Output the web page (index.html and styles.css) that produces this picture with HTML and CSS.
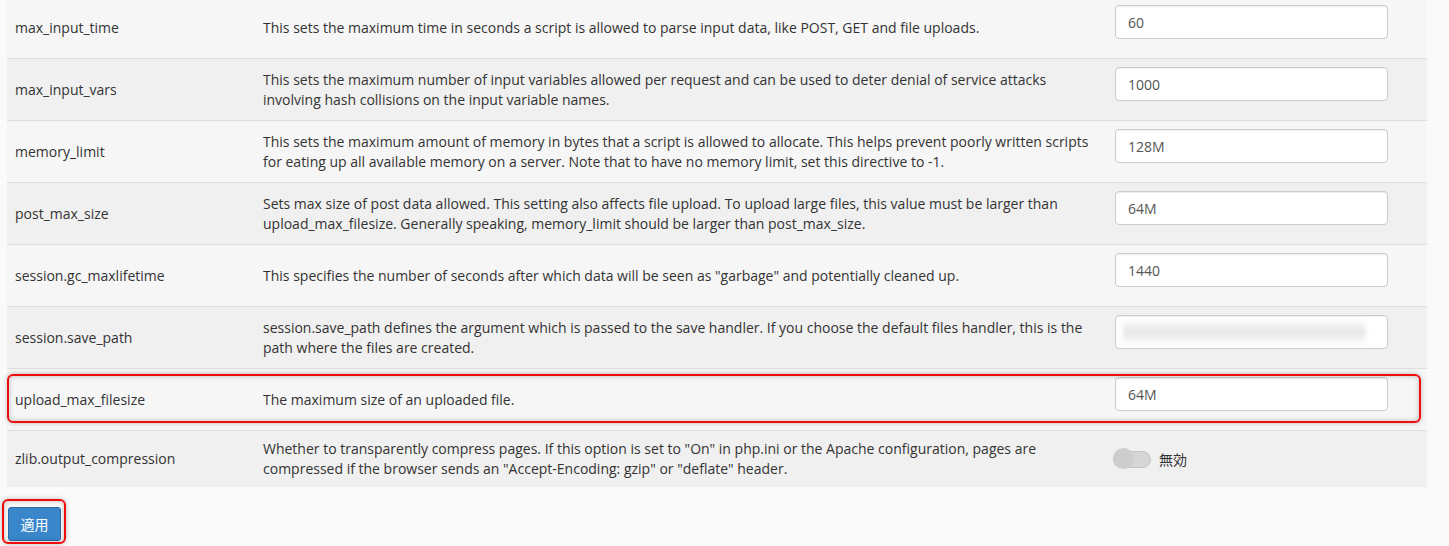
FILE: index.html
```html
<!doctype html>
<html>
<head>
    <meta charset="UTF-8">
    <title>PHP INI エディター</title>
    <link rel="stylesheet" href="styles.css">
</head>
<body>
<div class="page">
    <div class="table-wrap">
        <table class="ini-table">
            <colgroup>
                <col class="col-name">
                <col class="col-desc">
                <col class="col-value">
            </colgroup>
            <tbody>
                <tr>
                    <td>max_input_time</td>
                    <td>This sets the maximum time in seconds a script is allowed to parse input data, like POST, GET and file uploads.</td>
                    <td><input class="field" type="text" value="60"></td>
                </tr>
                <tr>
                    <td>max_input_vars</td>
                    <td>This sets the maximum number of input variables allowed per request and can be used to deter denial of service attacks involving hash collisions on the input variable names.</td>
                    <td><input class="field" type="text" value="1000"></td>
                </tr>
                <tr>
                    <td>memory_limit</td>
                    <td>This sets the maximum amount of memory in bytes that a script is allowed to allocate. This helps prevent poorly written scripts for eating up all available memory on a server. Note that to have no memory limit, set this directive to -1.</td>
                    <td><input class="field" type="text" value="128M"></td>
                </tr>
                <tr>
                    <td>post_max_size</td>
                    <td>Sets max size of post data allowed. This setting also affects file upload. To upload large files, this value must be larger than upload_max_filesize. Generally speaking, memory_limit should be larger than post_max_size.</td>
                    <td><input class="field" type="text" value="64M"></td>
                </tr>
                <tr>
                    <td>session.gc_maxlifetime</td>
                    <td>This specifies the number of seconds after which data will be seen as "garbage" and potentially cleaned up.</td>
                    <td><input class="field" type="text" value="1440"></td>
                </tr>
                <tr>
                    <td>session.save_path</td>
                    <td>session.save_path defines the argument which is passed to the save handler. If you choose the default files handler, this is the path where the files are created.</td>
                    <td>
                        <div class="field-wrap">
                            <input class="field" type="text" value="">
                            <span class="masked"></span>
                        </div>
                    </td>
                </tr>
                <tr>
                    <td>upload_max_filesize</td>
                    <td>The maximum size of an uploaded file.</td>
                    <td><input class="field" type="text" value="64M"></td>
                </tr>
                <tr class="no-field">
                    <td>zlib.output_compression</td>
                    <td>Whether to transparently compress pages. If this option is set to "On" in php.ini or the Apache configuration, pages are compressed if the browser sends an "Accept-Encoding: gzip" or "deflate" header.</td>
                    <td>
                        <div class="toggle">
                            <span class="toggle-track"><span class="toggle-knob"></span></span>
                            <span class="toggle-label">無効</span>
                        </div>
                    </td>
                </tr>
            </tbody>
        </table>
        <!-- 注釈の枠 -->
        <div class="mark mark-row"></div>
    </div>

    <div class="actions">
        <button class="btn-apply" type="button">適用</button>
        <div class="mark mark-btn"></div>
    </div>
</div>
</body>
</html>
```

FILE: styles.css
```css
body {
    margin: 0;
    background: #fafafa;
    font-family: 'Open Sans', 'Noto Sans CJK JP', sans-serif;
    font-size: 14px;
    line-height: 20px;
    color: #333;
}
.page {
    padding: 0 22px 0 7px;
}
.table-wrap {
    position: relative;
    margin-top: -4px;
}
.ini-table {
    width: 1420px;
    border-collapse: collapse;
    table-layout: fixed;
}
.col-name {
    width: 248px;
}
.col-desc {
    width: 852px;
}
.col-value {
    width: 320px;
}
.ini-table td {
    padding: 8px;
    border-top: 1px solid #ddd;
    vertical-align: middle;
}
.ini-table tr:nth-child(odd) {
    background: #f6f6f6;
}
.ini-table tr:nth-child(even) {
    background: #f0f0f0;
}
.field {
    display: block;
    box-sizing: border-box;
    width: 273px;
    height: 34px;
    margin-bottom: 11px;
    padding: 6px 12px;
    border: 1px solid #ccc;
    border-radius: 4px;
    background: #fff;
    font-family: 'Open Sans', sans-serif;
    font-size: 14px;
    color: #555;
    box-shadow: inset 0 1px 1px rgba(0, 0, 0, 0.075);
}
.field-wrap {
    position: relative;
}
.masked {
    position: absolute;
    left: 8px;
    top: 5px;
    width: 243px;
    height: 24px;
    background: linear-gradient(180deg, #fbfbfb, #e6e6e6 50%, #fbfbfb);
    filter: blur(2px);
}
.toggle {
    display: flex;
    align-items: center;
    gap: 8px;
    margin-left: -2px;
}
.toggle-track {
    position: relative;
    display: block;
    width: 36px;
    height: 15px;
    border: 1px solid #c4c4c4;
    border-radius: 9px;
    background: #d6d6d6;
}
.toggle-knob {
    position: absolute;
    left: -1px;
    top: -4px;
    width: 21px;
    height: 21px;
    border-radius: 50%;
    background: #cdcdcd;
}
.toggle-label {
    font-family: 'Noto Sans CJK JP', sans-serif;
    color: #333;
}
.actions {
    position: relative;
    padding: 20px 0 20px 1px;
}
.btn-apply {
    display: block;
    width: 53px;
    height: 34px;
    padding: 0;
    border: 1px solid #2b6ca8;
    border-radius: 3px;
    background: #3a86cb;
    color: #fff;
    font-family: 'Noto Sans CJK JP', sans-serif;
    font-size: 14px;
    cursor: pointer;
}
.mark {
    position: absolute;
    box-sizing: border-box;
    border: 2px solid #f20d0d;
    border-radius: 6px;
    box-shadow: 0 0 5px rgba(0, 0, 0, 0.25), inset 0 0 5px rgba(0, 0, 0, 0.25);
    pointer-events: none;
}
.mark-row {
    left: 0;
    top: 378px;
    width: 1414px;
    height: 49px;
}
.mark-btn {
    left: -5px;
    top: 12px;
    width: 64px;
    height: 45px;
}
```
